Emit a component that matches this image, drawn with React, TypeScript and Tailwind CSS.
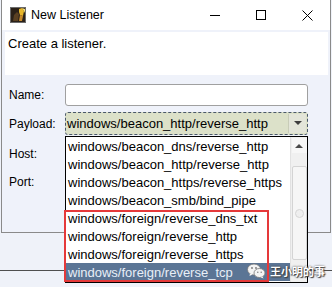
import React from 'react';

const payloads = [
  'windows/beacon_dns/reverse_http',
  'windows/beacon_http/reverse_http',
  'windows/beacon_https/reverse_https',
  'windows/beacon_smb/bind_pipe',
  'windows/foreign/reverse_dns_txt',
  'windows/foreign/reverse_http',
  'windows/foreign/reverse_https',
  'windows/foreign/reverse_tcp',
];

const AppIcon = () => (
  <svg width="16" height="16" viewBox="0 0 16 16">
    <rect x="0" y="0" width="16" height="16" fill="#2b2118" />
    <rect x="0.5" y="0.5" width="15" height="15" fill="none" stroke="#6b6b6b" />
    <path d="M3 14 L4 8 L7 5 L9 7 L8 14 Z" fill="#5a4022" />
    <path d="M9 2 L12 1 L14 4 L13 9 L10 8 L9 5 Z" fill="#e7b62a" />
    <path d="M10 8 L13 9 L12 14 L9 14 Z" fill="#c98a2a" />
    <path d="M12 1 L15 2 L15 6 L14 4 Z" fill="#f4e07a" />
  </svg>
);

const Field = ({ label, children }: { label: string; children?: React.ReactNode }) => (
  <div className="flex items-center pl-[7px]">
    <div className="w-[56px] text-[12px] leading-[14px] text-black">{label}</div>
    {children}
  </div>
);

export default function App() {
  return (
    <div className="relative w-[332px] h-[287px] overflow-hidden bg-[#eff2f9] font-['Liberation_Sans',Arial,sans-serif]">
      <div className="ml-px w-[330px] h-[233px] border-x border-b border-[#8a8a8a] bg-[#eff2fa] flex flex-col">
        {/* title bar */}
        <div className="h-[30px] bg-white flex items-center">
          <div className="pl-[8px] flex items-center">
            <AppIcon />
          </div>
          <span className="ml-[5px] text-[12.5px] text-black">New Listener</span>
          <div className="ml-auto flex h-full">
            <div className="w-[46px] h-full flex items-center justify-center">
              <div className="w-[10px] h-px bg-black" />
            </div>
            <div className="w-[46px] h-full flex items-center justify-center">
              <div className="w-[10px] h-[10px] border border-black" />
            </div>
            <div className="w-[46px] h-full flex items-center justify-center">
              <svg width="11" height="11" viewBox="0 0 11 11">
                <path d="M0.5 0.5 L10.5 10.5 M10.5 0.5 L0.5 10.5" stroke="#000" strokeWidth="1" />
              </svg>
            </div>
          </div>
        </div>

        <div className="mt-[2px] ml-[3px] w-[323px] h-[43px] bg-white pl-[3px] pt-[4px] text-[13px] leading-[15px] text-black">
          Create a listener.
        </div>

        <div className="mt-[9px]">
          <Field label="Name:">
            <div className="w-[243px] h-[22px] rounded-[3px] border border-[#a0a0a0] bg-white" />
          </Field>
        </div>
        <div className="mt-[6px]">
          <Field label="Payload:">
            <div className="w-[243px] h-[23px] rounded-[3px] border border-dashed border-[#4a586a] bg-[#dce1c9] flex items-center">
              <span className="flex-1 pl-px text-[13px] leading-[15px] text-black">windows/beacon_http/reverse_http</span>
              <div className="w-[18px] h-[19px] mr-px border-l border-[#c8ccb8] bg-[#e3e5d9] flex items-center justify-center">
                <svg width="8" height="5" viewBox="0 0 8 5">
                  <path d="M0 0 L8 0 L4 4 Z" fill="#3e3e3e" />
                </svg>
              </div>
            </div>
          </Field>
        </div>
        <div className="mt-[8px]">
          <Field label="Host:">
            <div className="w-[243px] h-[22px] rounded-[3px] border border-[#a0a0a0] bg-white" />
          </Field>
        </div>
        <div className="mt-[6px]">
          <Field label="Port:">
            <div className="w-[243px] h-[22px] rounded-[3px] border border-[#a0a0a0] bg-white" />
          </Field>
        </div>
      </div>

      {/* window behind */}
      <div className="h-[37px]" />
      <div className="h-px bg-[#4f4f4f]" />

      {/* dropdown popup */}
      <div className="absolute left-[65px] top-[136px] w-[243px] h-[147px] border border-black bg-white flex">
        <div className="flex-1 flex flex-col">
          {payloads.map((p, i) => {
            const selected = i === payloads.length - 1;
            return (
              <div
                key={p}
                className={
                  selected
                    ? 'h-[18px] flex items-center pl-[2px] text-[13px] leading-[15px] bg-[#5b7595] text-[#e8eff8]'
                    : 'h-[18px] flex items-center pl-[2px] text-[13px] leading-[15px] text-black'
                }
              >
                {p}
              </div>
            );
          })}
        </div>
        <div className="w-[17px] h-full bg-[#f0f0f0] border-l border-[#e2e2e2] flex flex-col items-center">
          <div className="mt-px w-[15px] h-[15px] bg-[#f7f7f7] flex items-center justify-center">
            <svg width="8" height="5" viewBox="0 0 8 5">
              <path d="M0 5 L8 5 L4 1 Z" fill="#4a4a4a" />
            </svg>
          </div>
          <div className="mt-[13px] w-[15px] h-[94px] rounded-[2px] border border-[#d4d4d4] bg-[#f6f6f6] flex items-center justify-center">
            <div className="w-[9px] h-[9px] rounded-full border border-[#d6d6d6] bg-[#efefef]" />
          </div>
        </div>
      </div>

      {/* annotation box */}
      <div className="absolute left-[64px] top-[210px] w-[205px] h-[72px] border-2 border-[#e5393a]" />

      {/* watermark */}
      <div className="absolute left-[247px] top-[263px] flex items-center gap-[4px] whitespace-nowrap">
        <svg width="19" height="16" viewBox="0 0 19 16">
          <ellipse cx="7" cy="6.5" rx="6.5" ry="5.5" fill="#f4f4f4" stroke="#777" strokeWidth="0.8" />
          <path d="M3 10.5 L2.5 13 L5.5 11.5 Z" fill="#f4f4f4" />
          <ellipse cx="12.5" cy="10" rx="5.5" ry="4.5" fill="#f4f4f4" stroke="#777" strokeWidth="0.8" />
          <path d="M15.5 13.5 L16.5 15.5 L13.5 14.2 Z" fill="#f4f4f4" />
          <circle cx="5" cy="5" r="0.9" fill="#777" />
          <circle cx="9" cy="5" r="0.9" fill="#777" />
          <circle cx="10.8" cy="9.2" r="0.7" fill="#777" />
          <circle cx="14.2" cy="9.2" r="0.7" fill="#777" />
        </svg>
        <span className="text-[11px] leading-[14px] font-bold text-white font-['Noto_Sans_CJK_SC',sans-serif] [text-shadow:0_0_2px_#333,1px_1px_1px_#444]">
          王小明的事
        </span>
      </div>
    </div>
  );
}
